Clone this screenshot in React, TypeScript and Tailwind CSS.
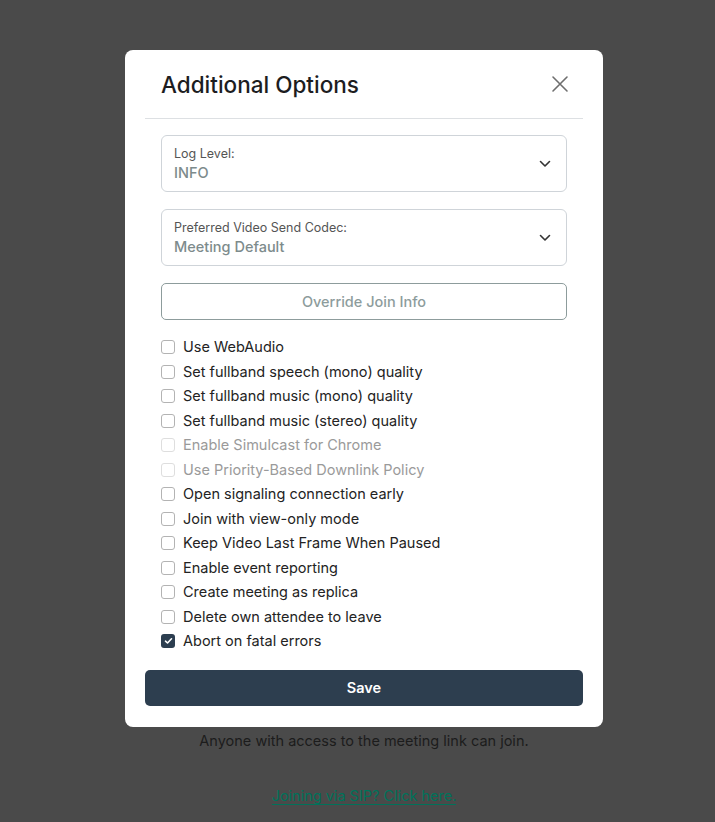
const options: { label: string; checked?: boolean; disabled?: boolean }[] = [
  { label: "Use WebAudio" },
  { label: "Set fullband speech (mono) quality" },
  { label: "Set fullband music (mono) quality" },
  { label: "Set fullband music (stereo) quality" },
  { label: "Enable Simulcast for Chrome", disabled: true },
  { label: "Use Priority-Based Downlink Policy", disabled: true },
  { label: "Open signaling connection early" },
  { label: "Join with view-only mode" },
  { label: "Keep Video Last Frame When Paused" },
  { label: "Enable event reporting" },
  { label: "Create meeting as replica" },
  { label: "Delete own attendee to leave" },
  { label: "Abort on fatal errors", checked: true },
];

function Chevron() {
  return (
    <svg width="12" height="8" viewBox="0 0 12 8" fill="none" className="text-[#333]">
      <path d="M1.5 1.5 6 6l4.5-4.5" stroke="currentColor" strokeWidth="1.6" strokeLinecap="round" strokeLinejoin="round" />
    </svg>
  );
}

function SelectBox({ label, value }: { label: string; value: string }) {
  return (
    <div className="flex h-[57px] items-center justify-between rounded-[6px] border border-[#cfd4d9] pl-[12px] pr-[15px]">
      <div className="flex flex-col">
        <span className="text-[12.5px] leading-[18px] text-[#555]">{label}</span>
        <span className="text-[14.5px] font-medium leading-[20px] text-[#7d8b8c]">{value}</span>
      </div>
      <Chevron />
    </div>
  );
}

function Checkbox({ checked, disabled }: { checked?: boolean; disabled?: boolean }) {
  if (checked) {
    return (
      <span className="flex h-[14px] w-[14px] items-center justify-center rounded-[3px] bg-[#2c3e50]">
        <svg width="9" height="8" viewBox="0 0 9 8" fill="none">
          <path d="M1.5 4.2 3.5 6l4-4.2" stroke="white" strokeWidth="1.6" strokeLinecap="round" strokeLinejoin="round" />
        </svg>
      </span>
    );
  }
  return (
    <span
      className={
        disabled
          ? "h-[14px] w-[14px] rounded-[3px] border border-[#dedede] bg-white"
          : "h-[14px] w-[14px] rounded-[3px] border border-[#b3b3b3] bg-white"
      }
    />
  );
}

export default function App() {
  return (
    <div
      className="relative h-[822px] w-full overflow-hidden bg-[#4a4a4a]"
      style={{ fontFamily: "Inter, 'Noto Sans', sans-serif" }}
    >
      <div className="flex flex-col items-center pl-[13px] pt-[729px]">
        <p className="text-[14.5px] leading-[24px] text-[#1c1c1c]">Anyone with access to the meeting link can join.</p>
        <a className="mt-[34px] block border-b border-[#00725a] text-[14.5px] leading-[17px] text-[#00725a]">
          Joining via SIP? Click here.
        </a>
      </div>

      <div className="absolute left-[125px] top-[50px] flex w-[478px] flex-col rounded-[8px] bg-white px-5 pb-[21px]">
        <div className="flex h-[69px] items-center justify-between border-b border-[#dde0e3] px-4">
          <h2 className="mt-[2px] text-[22.5px] font-medium leading-[28px] text-[#1d1d1f]">Additional Options</h2>
          <svg width="18" height="18" viewBox="0 0 18 18" fill="none" className="mr-[-2px]">
            <path d="M2 2l14 14M16 2 2 16" stroke="#6e6e6e" strokeWidth="1.6" strokeLinecap="round" />
          </svg>
        </div>

        <div className="flex flex-col px-4 pt-[16px]">
          <SelectBox label="Log Level:" value="INFO" />
          <div className="mt-[17px]">
            <SelectBox label="Preferred Video Send Codec:" value="Meeting Default" />
          </div>
          <button className="mt-[17px] h-[37px] rounded-[5px] border border-[#8d9c9c] text-[14.5px] font-medium text-[#8d9c9c]">
            Override Join Info
          </button>

          <ul className="mt-[15px] flex flex-col">
            {options.map((o) => (
              <li key={o.label} className="flex h-[24.5px] items-center gap-[8px]">
                <Checkbox checked={o.checked} disabled={o.disabled} />
                <span className={o.disabled ? "text-[14.5px] text-[#9a9a9a]" : "text-[14.5px] text-[#232323]"}>
                  {o.label}
                </span>
              </li>
            ))}
          </ul>
        </div>

        <button className="mt-[16px] h-[36px] rounded-[5px] bg-[#2d3e4f] text-[14.5px] font-semibold text-white">
          Save
        </button>
      </div>
    </div>
  );
}
